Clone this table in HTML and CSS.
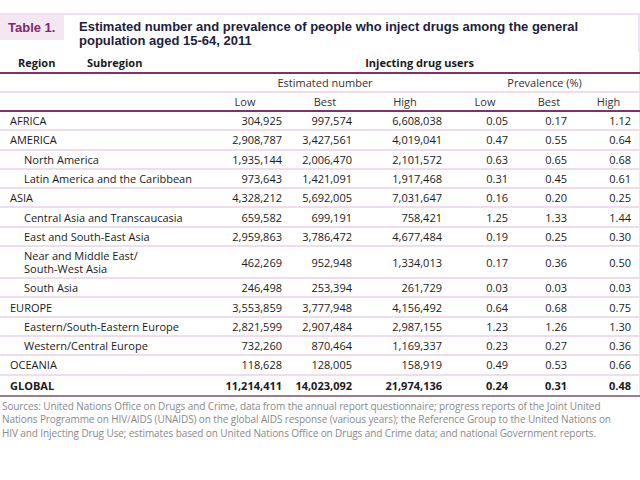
FILE: index.html
```html
<!DOCTYPE html>
<html>
<head>
<meta charset="utf-8">
<link rel="stylesheet" href="styles.css">
</head>
<body>
<div class="frame">
  <div class="title-bar">
    <div class="label">Table 1.</div>
    <div class="title">Estimated number and prevalence of people who inject drugs among the general<br>population aged 15-64, 2011</div>
  </div>
  <table class="data">
    <colgroup>
      <col class="c-name"><col class="c-low"><col class="c-best"><col class="c-high"><col class="c-plow"><col class="c-pbest"><col class="c-phigh">
    </colgroup>
    <thead>
      <tr class="h1">
        <th class="h-region"><span class="reg">Region</span><span class="sub">Subregion</span></th>
        <th colspan="6" class="center">Injecting drug users</th>
      </tr>
      <tr class="h2">
        <th></th>
        <th colspan="3" class="center">Estimated number</th>
        <th colspan="3" class="center">Prevalence (%)</th>
      </tr>
      <tr class="h3">
        <th></th>
        <th class="center">Low</th><th class="center">Best</th><th class="center">High</th>
        <th class="center">Low</th><th class="center">Best</th><th class="center">High</th>
      </tr>
    </thead>
    <tbody>
      <tr><td>AFRICA</td><td>304,925</td><td>997,574</td><td>6,608,038</td><td>0.05</td><td>0.17</td><td>1.12</td></tr>
      <tr><td>AMERICA</td><td>2,908,787</td><td>3,427,561</td><td>4,019,041</td><td>0.47</td><td>0.55</td><td>0.64</td></tr>
      <tr class="sub"><td>North America</td><td>1,935,144</td><td>2,006,470</td><td>2,101,572</td><td>0.63</td><td>0.65</td><td>0.68</td></tr>
      <tr class="sub"><td>Latin America and the Caribbean</td><td>973,643</td><td>1,421,091</td><td>1,917,468</td><td>0.31</td><td>0.45</td><td>0.61</td></tr>
      <tr><td>ASIA</td><td>4,328,212</td><td>5,692,005</td><td>7,031,647</td><td>0.16</td><td>0.20</td><td>0.25</td></tr>
      <tr class="sub"><td>Central Asia and Transcaucasia</td><td>659,582</td><td>699,191</td><td>758,421</td><td>1.25</td><td>1.33</td><td>1.44</td></tr>
      <tr class="sub"><td>East and South-East Asia</td><td>2,959,863</td><td>3,786,472</td><td>4,677,484</td><td>0.19</td><td>0.25</td><td>0.30</td></tr>
      <tr class="sub tall"><td class="two">Near and Middle East/<br>South-West Asia</td><td>462,269</td><td>952,948</td><td>1,334,013</td><td>0.17</td><td>0.36</td><td>0.50</td></tr>
      <tr class="sub"><td>South Asia</td><td>246,498</td><td>253,394</td><td>261,729</td><td>0.03</td><td>0.03</td><td>0.03</td></tr>
      <tr><td>EUROPE</td><td>3,553,859</td><td>3,777,948</td><td>4,156,492</td><td>0.64</td><td>0.68</td><td>0.75</td></tr>
      <tr class="sub"><td>Eastern/South-Eastern Europe</td><td>2,821,599</td><td>2,907,484</td><td>2,987,155</td><td>1.23</td><td>1.26</td><td>1.30</td></tr>
      <tr class="sub"><td>Western/Central Europe</td><td>732,260</td><td>870,464</td><td>1,169,337</td><td>0.23</td><td>0.27</td><td>0.36</td></tr>
      <tr><td>OCEANIA</td><td>118,628</td><td>128,005</td><td>158,919</td><td>0.49</td><td>0.53</td><td>0.66</td></tr>
      <tr class="global"><td>GLOBAL</td><td>11,214,411</td><td>14,023,092</td><td>21,974,136</td><td>0.24</td><td>0.31</td><td>0.48</td></tr>
    </tbody>
  </table>
  <p class="sources">Sources: United Nations Office on Drugs and Crime, data from the annual report questionnaire; progress reports of the Joint United<br>Nations Programme on HIV/AIDS (UNAIDS) on the global AIDS response (various years); the Reference Group to the United Nations on<br>HIV and Injecting Drug Use; estimates based on United Nations Office on Drugs and Crime data; and national Government reports.</p>
</div>
</body>
</html>
```

FILE: styles.css
```css
html, body {
  margin: 0;
  padding: 0;
  background: #ffffff;
}

.frame {
  margin-top: 13px;
  width: 640px;
}

.title-bar {
  display: flex;
  align-items: flex-start;
  border-top: 2px solid #f2e0ee;
  border-right: 2px solid #f2e0ee;
  height: 37px;
}

.label {
  width: 56px;
  height: 25px;
  padding-left: 8px;
  background: #f4e7f2;
  color: #7b2c6c;
  font: bold 13px/25px "Liberation Sans", Arial, sans-serif;
  white-space: nowrap;
}

.title {
  padding-left: 15px;
  padding-top: 5px;
  color: #1d1d3d;
  font: bold 13px/14px "Liberation Sans", Arial, sans-serif;
  white-space: nowrap;
}

.data {
  width: 640px;
  border-collapse: collapse;
  table-layout: fixed;
  font-family: "Open Sans", "Noto Sans", sans-serif;
  font-size: 11px;
  color: #1a1a1a;
  border-right: 2px solid #f2e0ee;
}

.c-name { width: 200px; }
.c-low { width: 90px; }
.c-best { width: 70px; }
.c-high { width: 90px; }
.c-plow { width: 70px; }
.c-pbest { width: 58px; }
.c-phigh { width: 62px; }

.data th {
  font-weight: normal;
  padding: 0;
  white-space: nowrap;
}

.data .center { text-align: center; }

.h1 th {
  font-weight: bold;
  height: 20px;
  vertical-align: middle;
  text-align: left;
  border-bottom: 2px solid #80306a;
}
.h1 th.center { text-align: center; }

.h-region .reg {
  display: inline-block;
  padding-left: 18px;
  width: 69px;
}
.h-region .sub { display: inline-block; }

.h2 th {
  height: 17px;
  border-bottom: 2px solid #f0dcec;
  color: #333;
}

.h3 th {
  height: 17px;
  border-bottom: 2px solid #80306a;
  color: #333;
}

.data td {
  height: 17.3px;
  padding: 0 8px 0 0;
  text-align: right;
  border-bottom: 2px solid #efdcec;
  white-space: nowrap;
  vertical-align: middle;
}

.data td:first-child {
  text-align: left;
  padding-left: 10px;
}

.data tr.sub td:first-child { padding-left: 24px; }

.data td:nth-child(5) { padding-right: 12px; }
.data td:nth-child(6) { padding-right: 11px; }

.data tr.tall td { height: 30px; }
.data td.two { line-height: 13px; }

.data tr.global td {
  font-weight: bold;
  height: 19px;
  border-bottom: 2px solid #9b7d92;
}

.sources {
  margin: 3px 0 0 2px;
  color: #8a8a8a;
  font-family: "Open Sans", sans-serif;
  font-size: 10px;
  line-height: 13.5px;
  white-space: nowrap;
  letter-spacing: -0.1px;
}
```
